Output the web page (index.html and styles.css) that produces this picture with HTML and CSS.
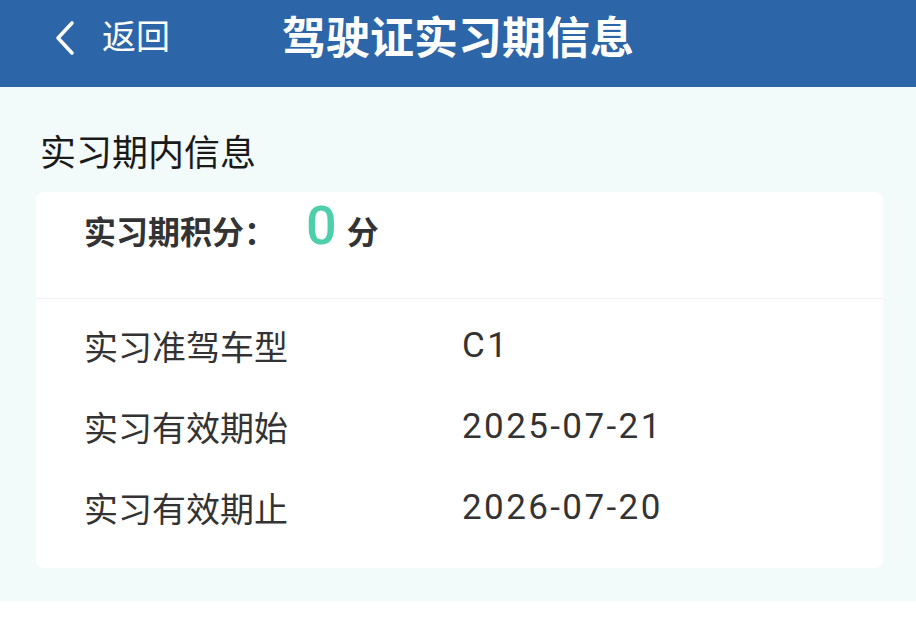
FILE: index.html
```html
<!DOCTYPE html>
<html lang="zh-CN">
<head>
  <meta charset="UTF-8">
  <meta name="viewport" content="width=device-width, initial-scale=1.0">
  <title>驾驶证实习期信息</title>
  <link rel="stylesheet" href="styles.css">
</head>
<body>

<!-- Top bar -->
<div class="top-bar">
  <div class="back-btn">
    <svg class="back-icon" width="26" height="36" viewBox="0 0 26 36">
      <path d="M20 3 L6 18 L20 33" fill="none" stroke="#fff" stroke-width="3.6" stroke-linecap="round" stroke-linejoin="round"/>
    </svg>
    <span>返回</span>
  </div>
  <h1 class="page-title">驾驶证实习期信息</h1>
  <div></div>
</div>

<div class="content">
  <div class="section-title">实习期内信息</div>

  <div class="info-card">
    <div class="score-row">
      <span class="score-label">实习期积分：</span>
      <span class="score-value">0</span>
      <span class="score-unit">分</span>
    </div>

    <div class="info-list">
      <div class="info-row">
        <span class="info-label">实习准驾车型</span>
        <span class="info-value">C1</span>
      </div>
      <div class="info-row">
        <span class="info-label">实习有效期始</span>
        <span class="info-value">2025-07-21</span>
      </div>
      <div class="info-row">
        <span class="info-label">实习有效期止</span>
        <span class="info-value">2026-07-20</span>
      </div>
    </div>
  </div>
</div>

</body>
</html>
```

FILE: styles.css
```css
* { box-sizing: border-box; }

body, html {
  margin: 0;
  padding: 0;
  font-family: "Noto Sans CJK SC", "Noto Sans", sans-serif;
  background-color: #ffffff;
  color: #333;
}

.top-bar {
  display: grid;
  grid-template-columns: 1fr auto 1fr;
  align-items: center;
  height: 87px;
  padding-bottom: 18px;
  background-color: #2c66a8;
  color: #fff;
}

.back-btn {
  display: flex;
  align-items: center;
  padding-left: 52px;
  font-size: 34px;
}

.back-icon {
  margin-right: 24px;
  margin-top: 6px;
}

.page-title {
  margin: 0;
  font-size: 44px;
  font-weight: bold;
}

.content {
  background-color: #f3fafa;
  padding: 38px 33px 33px 36px;
}

.section-title {
  font-size: 36px;
  color: #1a1a1a;
  padding-left: 4px;
  line-height: 50px;
  margin-bottom: 17px;
}

.info-card {
  background: white;
  border-radius: 8px;
}

.score-row {
  display: flex;
  align-items: baseline;
  height: 107px;
  padding: 2px 0 0 48px;
  border-bottom: 1px solid #f0f0f0;
}

.score-label {
  font-size: 32px;
  font-weight: bold;
  color: #333;
}

.score-value {
  font-family: Roboto, sans-serif;
  font-size: 54px;
  font-weight: 500;
  color: #4ccfaa;
  margin: 0 10px 0 30px;
}

.score-unit {
  font-size: 32px;
  font-weight: bold;
  color: #333;
}

.info-list {
  padding: 6px 0 20px 48px;
}

.info-row {
  display: flex;
  align-items: center;
  height: 81px;
  font-size: 34px;
  color: #333;
}

.info-label {
  width: 378px;
}

.info-value {
  font-family: Roboto, sans-serif;
  font-size: 35px;
  letter-spacing: 2.4px;
}
```
